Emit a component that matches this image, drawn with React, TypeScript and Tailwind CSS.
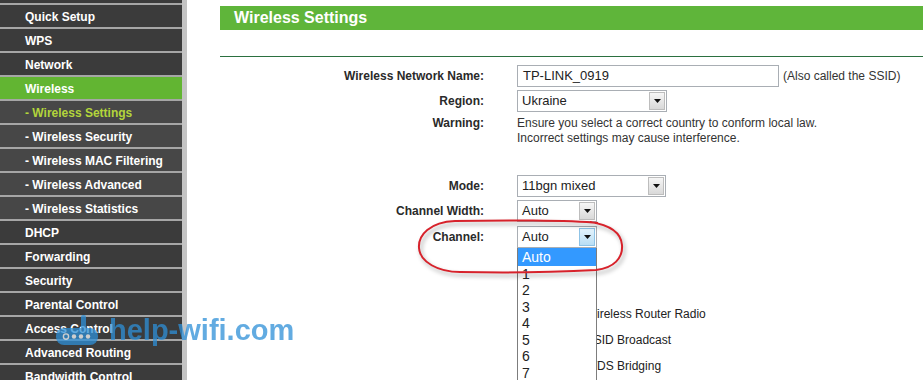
import React from "react";

const menu: { label: string; sub?: boolean; active?: boolean; current?: boolean }[] = [
  { label: "Quick Setup" },
  { label: "WPS" },
  { label: "Network" },
  { label: "Wireless", active: true },
  { label: "- Wireless Settings", sub: true, current: true },
  { label: "- Wireless Security", sub: true },
  { label: "- Wireless MAC Filtering", sub: true },
  { label: "- Wireless Advanced", sub: true },
  { label: "- Wireless Statistics", sub: true },
  { label: "DHCP" },
  { label: "Forwarding" },
  { label: "Security" },
  { label: "Parental Control" },
  { label: "Access Control" },
  { label: "Advanced Routing" },
  { label: "Bandwidth Control" },
];

function Arrow({ focused }: { focused?: boolean }) {
  return (
    <div
      className={
        focused
          ? "w-[16px] h-[18px] mr-[1px] border border-[#8ec3e6] bg-gradient-to-b from-[#e4f3fc] to-[#b9def4] flex items-center justify-center"
          : "w-[16px] h-[18px] mr-[1px] border border-[#bdbdbd] bg-gradient-to-b from-[#f6f6f6] to-[#d9d9d9] flex items-center justify-center"
      }
    >
      <svg width="7" height="4" viewBox="0 0 7 4">
        <path d="M0 0H7L3.5 4Z" fill="#111" />
      </svg>
    </div>
  );
}

function Select({ value, w, focused }: { value: string; w: string; focused?: boolean }) {
  return (
    <div className={`${w} h-[22px] border border-[#a9aeb4] bg-white flex items-center`}>
      <span className="flex-1 pl-[4px] text-[13px] text-[#222]">{value}</span>
      <Arrow focused={focused} />
    </div>
  );
}

function Row({ label, children, className }: { label: string; children: React.ReactNode; className: string }) {
  return (
    <div className={`flex items-center ${className}`}>
      <div className="w-[297px] text-right text-[12px] font-bold text-[#2a2a2a]">{label}</div>
      <div className="ml-[33px] flex items-center">{children}</div>
    </div>
  );
}

export default function App() {
  return (
    <div className="relative w-[923px] h-[380px] overflow-hidden flex bg-white font-['Liberation_Sans',Arial,sans-serif]">
      <aside className="w-[182px] shrink-0 flex flex-col bg-[#3b3b3b]">
        <div className="h-[3px] shrink-0 bg-[#3b3b3b]" />
        {menu.map((m) => (
          <div
            key={m.label}
            className={
              "h-[24px] shrink-0 border-t-2 border-[#a6a6a6] flex items-center pl-[25px] pt-[1px] text-[12px] font-bold whitespace-nowrap " +
              (m.active
                ? "bg-[#62b532] text-white"
                : m.sub
                ? m.current
                  ? "bg-[#474747] text-[#b3d53b]"
                  : "bg-[#474747] text-white"
                : "bg-[#3b3b3b] text-white")
            }
          >
            {m.label}
          </div>
        ))}
      </aside>
      <div className="w-[5px] shrink-0 bg-[#c4c4c4]" />

      <main className="flex-1 flex flex-col">
        <div className="mt-[6px] ml-[33px] h-[24px] bg-[#5fb53a] flex items-center pl-[14px] text-white font-bold text-[16px]">
          Wireless Settings
        </div>
        <div className="mt-[26px] ml-[33px] h-px bg-[#2b7040]" />

        <Row label="Wireless Network Name:" className="mt-[8px] h-[22px]">
          <div className="w-[262px] h-[22px] border border-[#a9aeb4] flex items-center pl-[5px] text-[13px] text-[#222]">
            TP-LINK_0919
          </div>
          <span className="ml-[4px] text-[12px] text-[#333] whitespace-nowrap">(Also called the SSID)</span>
        </Row>

        <Row label="Region:" className="mt-[3px] h-[22px]">
          <Select value="Ukraine" w="w-[150px]" />
        </Row>

        <div className="flex items-start mt-[4px] leading-[15px]">
          <div className="w-[297px] text-right text-[12px] font-bold text-[#2a2a2a]">Warning:</div>
          <div className="ml-[33px] text-[12px] text-[#333]">
            <div>Ensure you select a correct country to conform local law.</div>
            <div>Incorrect settings may cause interference.</div>
          </div>
        </div>

        <Row label="Mode:" className="mt-[29px] h-[22px]">
          <Select value="11bgn mixed" w="w-[149px]" />
        </Row>
        <Row label="Channel Width:" className="mt-[3px] h-[22px]">
          <Select value="Auto" w="w-[80px]" />
        </Row>
        <Row label="Channel:" className="mt-[4px] h-[22px]">
          <Select value="Auto" w="w-[80px]" focused />
        </Row>

        <div className="mt-[53px] flex flex-col text-[12px] text-[#222]">
          {[
            ["Enable Wireless Router Radio", true],
            ["Enable SSID Broadcast", true],
            ["Enable WDS Bridging", false],
          ].map(([t, c]) => (
            <div key={t as string} className="h-[26px] flex items-center pl-[332px]">
              <input type="checkbox" defaultChecked={c as boolean} className="w-[13px] h-[13px] ml-[1px]" />
              <span className="ml-[12px] whitespace-nowrap">{t as string}</span>
            </div>
          ))}
        </div>
      </main>

      {/* open dropdown list */}
      <div className="absolute left-[517px] top-[248px] w-[80px] h-[140px] bg-white border-x border-[#7d7d7d] flex flex-col text-[14px] text-[#222]">
        <div className="h-[18px] bg-[#3399ff] text-white pl-[4px] flex items-center">Auto</div>
        {["1", "2", "3", "4", "5", "6", "7"].map((n) => (
          <div key={n} className="h-[16.5px] pl-[4px] flex items-center">
            {n}
          </div>
        ))}
      </div>

      {/* red annotation */}
      <svg className="absolute left-0 top-0 pointer-events-none drop-shadow-[2px_3px_2px_rgba(0,0,0,0.35)]" width="923" height="380">
        <path
          d="M598 223 C570 220 500 220 455 221 C430 222 418 235 419 248 C420 262 438 272 460 272 C510 273 560 272 596 270 C614 268 623 258 622 245 C621 232 610 225 590 222"
          fill="none"
          stroke="#d7222b"
          strokeWidth="2"
        />
      </svg>

      {/* watermark */}
      <div className="absolute left-[54px] top-[313px] flex items-end opacity-75">
        <svg width="48" height="34" viewBox="0 0 48 34">
          <rect x="27" y="2" width="5" height="16" rx="2" fill="#2e90d8" />
          <rect x="2" y="15" width="42" height="17" rx="8" fill="#2e90d8" />
          <circle cx="12" cy="23.5" r="2.6" fill="none" stroke="#fff" strokeWidth="1.4" />
          <circle cx="20" cy="23.5" r="2.2" fill="#fff" />
          <circle cx="27" cy="23.5" r="2.2" fill="#fff" />
          <circle cx="34" cy="23.5" r="2.2" fill="#fff" />
        </svg>
        <span className="ml-[7px] text-[29px] font-bold leading-none text-[#2e90d8] mb-[2px]">help-wifi.com</span>
      </div>
    </div>
  );
}
